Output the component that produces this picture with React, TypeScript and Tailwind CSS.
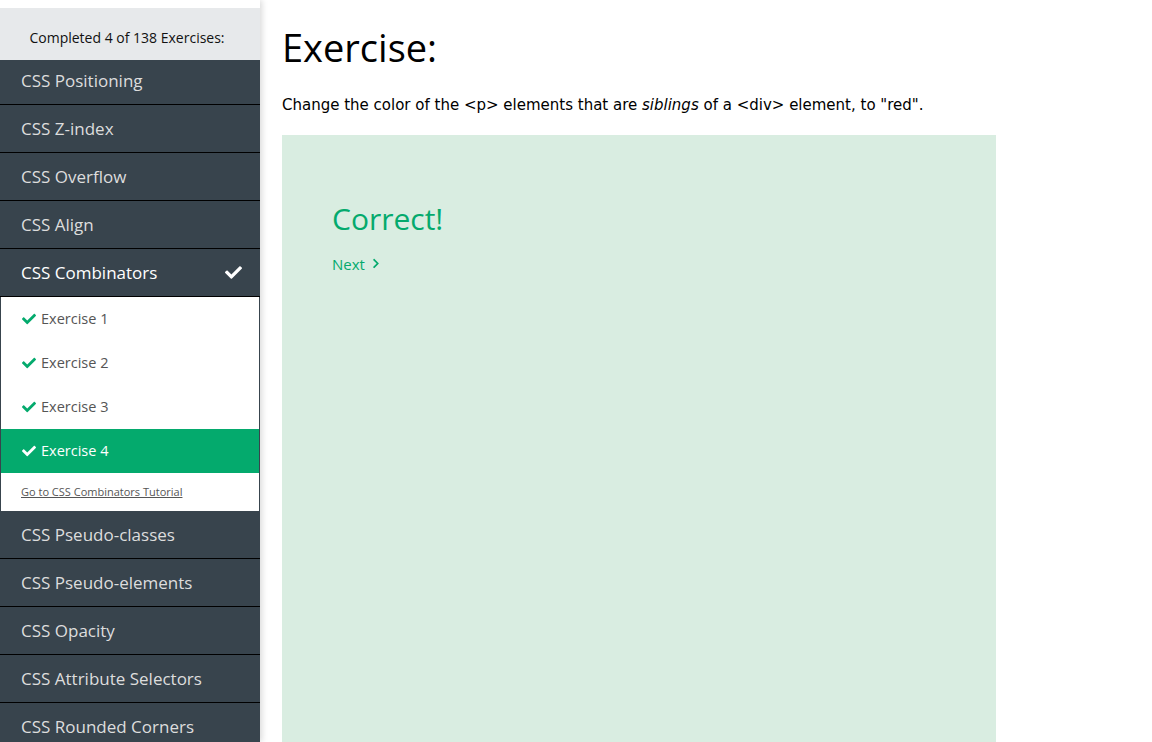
import { FaCheck, FaChevronRight } from "react-icons/fa";

const before = ["CSS Positioning", "CSS Z-index", "CSS Overflow", "CSS Align"];
const after = [
  "CSS Pseudo-classes",
  "CSS Pseudo-elements",
  "CSS Opacity",
  "CSS Attribute Selectors",
  "CSS Rounded Corners",
];

const exercises = ["Exercise 1", "Exercise 2", "Exercise 3", "Exercise 4"];

const SideRow = ({ label, first }: { label: string; first?: boolean }) => (
  <div
    className={`${first ? "h-[45px] pb-[2px]" : "h-[48px]"} flex items-center px-[21px] text-[17px] text-[#dddddd] border-b border-black`}
  >
    {label}
  </div>
);

const App = () => {
  return (
    <div
      className="flex h-[742px] overflow-hidden bg-white"
      style={{ fontFamily: "'Open Sans', 'Noto Sans', sans-serif" }}
    >
      <aside className="w-[260px] shrink-0 bg-[#38444d] shadow-[2px_0_6px_rgba(0,0,0,0.15)] relative z-10">
        <div className="h-[8px] bg-white" />
        <div className="h-[52px] bg-[#e7e9eb] flex items-center justify-center pt-[6px] pr-[6px] text-[14px] text-[#111]">
          Completed 4 of 138 Exercises:
        </div>
        {before.map((b, i) => (
          <SideRow key={b} label={b} first={i === 0} />
        ))}
        <div className="h-[48px] flex items-center justify-between pl-[21px] pr-[18px] text-[17px] text-white border-b border-black">
          <span>CSS Combinators</span>
          <FaCheck className="w-[17px] h-[17px]" />
        </div>
        <div className="bg-white border-x border-[#38444d]">
          {exercises.map((e, i) => (
            <div
              key={e}
              className={`h-[44px] flex items-center gap-[5px] pl-[21px] text-[14.5px] ${
                i === 3 ? "bg-[#04aa6d] text-white" : "text-[#555]"
              }`}
            >
              <FaCheck
                className={`w-[14px] h-[14px] ${i === 3 ? "text-white" : "text-[#04aa6d]"}`}
              />
              <span>{e}</span>
            </div>
          ))}
          <div className="h-[38px] flex items-center pl-[20px] text-[11px] text-[#555] underline">
            Go to CSS Combinators Tutorial
          </div>
        </div>
        {after.map((a) => (
          <SideRow key={a} label={a} />
        ))}
      </aside>
      <main className="flex-1 pl-[22px]">
        <h1 className="text-[38px] leading-none text-black mt-[28px] mb-[28px]">
          Exercise:
        </h1>
        <p
          className="text-[15px] text-black mb-[18px]"
          style={{ fontFamily: "'DejaVu Sans', Verdana, sans-serif" }}
        >
          Change the color of the &lt;p&gt; elements that are <i>siblings</i> of a
          &lt;div&gt; element, to "red".
        </p>
        <div className="w-[714px] h-[700px] bg-[#d9ede1] pl-[50px] pt-[69px]">
          <div className="text-[30px] text-[#04aa6d] leading-none mb-[19px]">
            Correct!
          </div>
          <div className="flex items-center gap-[6px] text-[15px] text-[#04aa6d]">
            Next <FaChevronRight className="w-[10px] h-[11px]" />
          </div>
        </div>
      </main>
    </div>
  );
};

export default App;
